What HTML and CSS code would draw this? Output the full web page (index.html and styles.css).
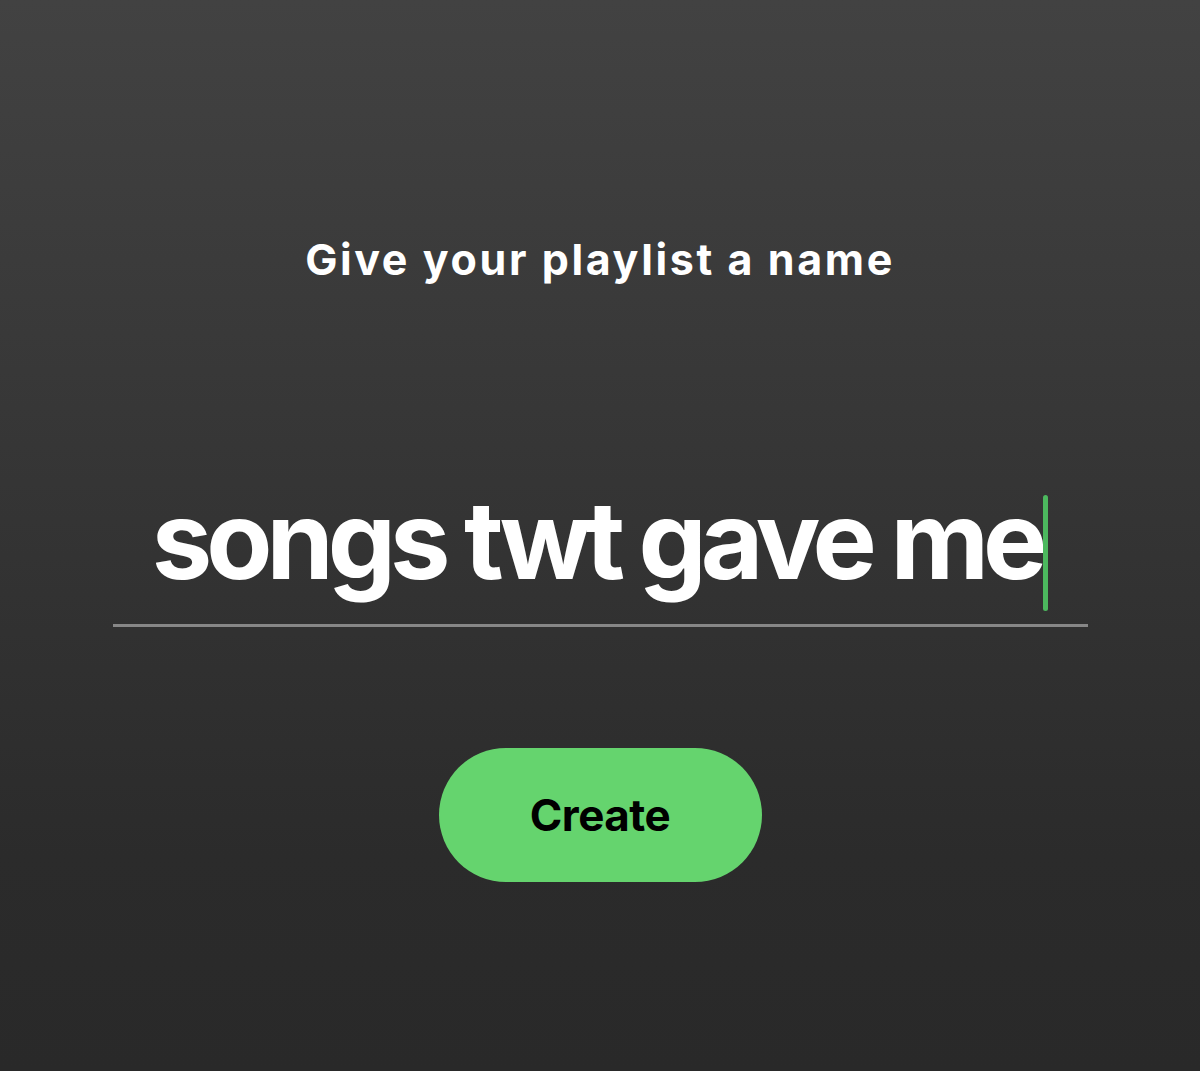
FILE: index.html
```html
<!DOCTYPE html>
<html lang="en">
<head>
<meta charset="utf-8">
<title>Give your playlist a name</title>
<link rel="stylesheet" href="styles.css">
</head>
<body>
<main class="screen">
  <h1 class="title">Give your playlist a name</h1>
  <div class="field">
    <span class="value">songs twt gave me</span><span class="caret"></span>
  </div>
  <button class="create" type="button">Create</button>
</main>
</body>
</html>
```
FILE: styles.css
```css
html, body {
  margin: 0;
  padding: 0;
  height: 100%;
}
body {
  background: linear-gradient(to bottom, #424242 0%, #353535 45%, #2b2b2b 80%, #292929 100%);
  font-family: Inter, "Liberation Sans", sans-serif;
  color: #ffffff;
}
.screen {
  display: flex;
  flex-direction: column;
  align-items: center;
  padding-top: 229px;
}
.title {
  margin: 0;
  font-size: 43px;
  font-weight: 700;
  line-height: 60px;
  letter-spacing: 2.6px;
}
.field {
  width: 975px;
  margin-top: 208px;
  display: flex;
  justify-content: center;
  align-items: flex-end;
  border-bottom: 3px solid #878787;
  height: 130px;
  box-sizing: border-box;
}
.value {
  font-size: 108px;
  font-weight: 700;
  line-height: 1;
  letter-spacing: -6px;
  padding-bottom: 30px;
}
.caret {
  display: inline-block;
  width: 5px;
  height: 116px;
  border-radius: 3px;
  background: #4cb85e;
  margin-left: 2px;
  margin-bottom: 13px;
}
.create {
  margin-top: 121px;
  width: 323px;
  height: 134px;
  border: none;
  border-radius: 67px;
  background: #65d46e;
  color: #000000;
  font-family: Inter, "Liberation Sans", sans-serif;
  font-size: 44px;
  font-weight: 700;
  letter-spacing: -0.5px;
  padding: 0;
}
```
